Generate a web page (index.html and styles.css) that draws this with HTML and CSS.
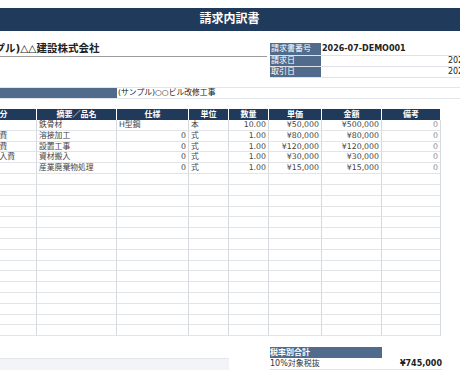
FILE: index.html
```html
<!DOCTYPE html>
<html lang="ja">
<head>
<meta charset="utf-8">
<title>請求内訳書</title>
<link rel="stylesheet" href="styles.css">
</head>
<body>
<div class="sheet">
  <div class="title">請求内訳書</div>
  <div class="top">
    <div class="company">(サンプル)△△建設株式会社</div>
    <div class="info">
      <div class="info-row first"><span class="lbl">請求書番号</span><span class="val bold">2026-07-DEMO001</span></div>
      <div class="info-row"><span class="lbl">請求日</span><span class="val num">2026/07/31</span></div>
      <div class="info-row"><span class="lbl">取引日</span><span class="val num">2026/07/15</span></div>
    </div>
  </div>
  <div class="project"><span class="plabel">件名</span><span class="pval">(サンプル)○○ビル改修工事</span></div>
  <div class="grid">
    <div class="h">区分</div><div class="h">摘要／品名</div><div class="h">仕様</div><div class="h">単位</div><div class="h">数量</div><div class="h">単価</div><div class="h">金額</div><div class="h">備考</div>

    <div class="c"></div><div class="c">鉄骨材</div><div class="c">H型鋼</div><div class="c">本</div><div class="c r">10.00</div><div class="c r">¥50,000</div><div class="c r">¥500,000</div><div class="c r z">0</div>
    <div class="c cat">外注加工経費</div><div class="c">溶接加工</div><div class="c r">0</div><div class="c">式</div><div class="c r">1.00</div><div class="c r">¥80,000</div><div class="c r">¥80,000</div><div class="c r z">0</div>
    <div class="c cat">設置工事経費</div><div class="c">設置工事</div><div class="c r">0</div><div class="c">式</div><div class="c r">1.00</div><div class="c r">¥120,000</div><div class="c r">¥120,000</div><div class="c r z">0</div>
    <div class="c cat">資材等の搬入費</div><div class="c">資材搬入</div><div class="c r">0</div><div class="c">式</div><div class="c r">1.00</div><div class="c r">¥30,000</div><div class="c r">¥30,000</div><div class="c r z">0</div>
    <div class="c"></div><div class="c">産業廃棄物処理</div><div class="c r">0</div><div class="c">式</div><div class="c r">1.00</div><div class="c r">¥15,000</div><div class="c r">¥15,000</div><div class="c r z">0</div>

    <div class="c"></div><div class="c"></div><div class="c"></div><div class="c"></div><div class="c"></div><div class="c"></div><div class="c"></div><div class="c"></div>
    <div class="c"></div><div class="c"></div><div class="c"></div><div class="c"></div><div class="c"></div><div class="c"></div><div class="c"></div><div class="c"></div>
    <div class="c"></div><div class="c"></div><div class="c"></div><div class="c"></div><div class="c"></div><div class="c"></div><div class="c"></div><div class="c"></div>
    <div class="c"></div><div class="c"></div><div class="c"></div><div class="c"></div><div class="c"></div><div class="c"></div><div class="c"></div><div class="c"></div>
    <div class="c"></div><div class="c"></div><div class="c"></div><div class="c"></div><div class="c"></div><div class="c"></div><div class="c"></div><div class="c"></div>
    <div class="c"></div><div class="c"></div><div class="c"></div><div class="c"></div><div class="c"></div><div class="c"></div><div class="c"></div><div class="c"></div>
    <div class="c"></div><div class="c"></div><div class="c"></div><div class="c"></div><div class="c"></div><div class="c"></div><div class="c"></div><div class="c"></div>
    <div class="c"></div><div class="c"></div><div class="c"></div><div class="c"></div><div class="c"></div><div class="c"></div><div class="c"></div><div class="c"></div>
    <div class="c"></div><div class="c"></div><div class="c"></div><div class="c"></div><div class="c"></div><div class="c"></div><div class="c"></div><div class="c"></div>
    <div class="c"></div><div class="c"></div><div class="c"></div><div class="c"></div><div class="c"></div><div class="c"></div><div class="c"></div><div class="c"></div>
    <div class="c"></div><div class="c"></div><div class="c"></div><div class="c"></div><div class="c"></div><div class="c"></div><div class="c"></div><div class="c"></div>
    <div class="c"></div><div class="c"></div><div class="c"></div><div class="c"></div><div class="c"></div><div class="c"></div><div class="c"></div><div class="c"></div>
    <div class="c"></div><div class="c"></div><div class="c"></div><div class="c"></div><div class="c"></div><div class="c"></div><div class="c"></div><div class="c"></div>
    <div class="c"></div><div class="c"></div><div class="c"></div><div class="c"></div><div class="c"></div><div class="c"></div><div class="c"></div><div class="c"></div>
    <div class="c"></div><div class="c"></div><div class="c"></div><div class="c"></div><div class="c"></div><div class="c"></div><div class="c"></div><div class="c"></div>
  </div>
  <div class="summary">
    <div class="memo"></div>
    <div class="totals">
      <div class="tlabel">税率別合計</div>
      <div class="trow"><span>10%対象税抜</span><span class="amount">¥745,000</span></div>
    </div>
  </div>
</div>
</body>
</html>
```

FILE: styles.css
```css
* { box-sizing: border-box; }

body {
  margin: 0;
  overflow: hidden;
  background: #ffffff;
  font-family: "DejaVu Sans", "Noto Sans CJK JP", sans-serif;
  color: #333;
}

.sheet {
  margin-left: -37px;
  width: 533px;
  padding-top: 8px;
}

.title {
  height: 23px;
  background: #1f3a5b;
  color: #fff;
  font-weight: bold;
  font-size: 12px;
  line-height: 23px;
  text-align: center;
}

.top {
  display: flex;
  align-items: flex-start;
  height: 47px;
}

.company {
  width: 304px;
  margin-top: 10px;
  height: 16px;
  border-bottom: 1px solid #9c9c9c;
  padding-left: 6px;
  font-weight: bold;
  font-size: 10.5px;
  line-height: 15px;
  color: #222;
  white-space: nowrap;
}

.info {
  margin-left: 3px;
  margin-top: 12px;
  width: 226px;
}

.info-row {
  display: flex;
  height: 11px;
  border-bottom: 1px solid #dfe2e6;
  font-size: 8px;
  line-height: 10px;
}

.info-row.first {
  height: 13px;
  line-height: 12px;
}

.lbl {
  width: 51px;
  background: #506b8c;
  color: #fff;
  padding-left: 1px;
}

.val {
  flex: 1;
  white-space: nowrap;
  color: #222;
}

.val.bold {
  font-weight: bold;
  padding-left: 1px;
}

.val.num {
  text-align: right;
  padding-right: 2px;
}

.project {
  display: flex;
  margin-top: 9px;
  height: 12px;
  border-top: 1px solid #e2e5e9;
  border-bottom: 1px solid #e2e5e9;
  font-size: 7.8px;
  line-height: 10px;
}

.plabel {
  width: 154px;
  background: #506b8c;
  color: #506b8c;
  padding-left: 2px;
}

.pval {
  padding-left: 1px;
  color: #222;
  white-space: nowrap;
}

.grid {
  display: grid;
  margin-top: 10px;
  width: 478px;
  grid-template-columns: 74px 80px 72px 40px 40px 53px 60px 59px;
  grid-template-rows: 11px repeat(20, 10.825px);
}

.h {
  background: #1f3a5b;
  color: #fff;
  font-weight: bold;
  font-size: 8px;
  line-height: 11px;
  text-align: center;
  border-right: 1px solid #fff;
}

.h:last-child {
  border-right: none;
}

.c {
  font-size: 7.8px;
  line-height: 10px;
  padding: 0 2px;
  white-space: nowrap;
  overflow: hidden;
  color: #444;
  border-right: 1px solid #d6d9dd;
  border-bottom: 1px solid #e2e5e8;
}

.c.r {
  text-align: right;
}

.c.z {
  color: #8a8a8a;
}

.c.cat {
  padding-left: 0;
  text-indent: -2.5px;
}

.summary {
  display: flex;
  align-items: flex-end;
  margin-top: 10.5px;
}

.memo {
  width: 266px;
  height: 12px;
  background: #f2f4f7;
  border-top: 1px solid #e3e6ea;
}

.totals {
  margin-left: 41px;
  width: 172px;
}

.tlabel {
  width: 112px;
  height: 11px;
  background: #506b8c;
  color: #fff;
  font-weight: bold;
  font-size: 8px;
  line-height: 11px;
}

.trow {
  display: flex;
  justify-content: space-between;
  height: 12px;
  border-bottom: 1px solid #dfe2e6;
  font-size: 8px;
  line-height: 11px;
  color: #333;
}

.amount {
  font-weight: bold;
  color: #222;
}
```
